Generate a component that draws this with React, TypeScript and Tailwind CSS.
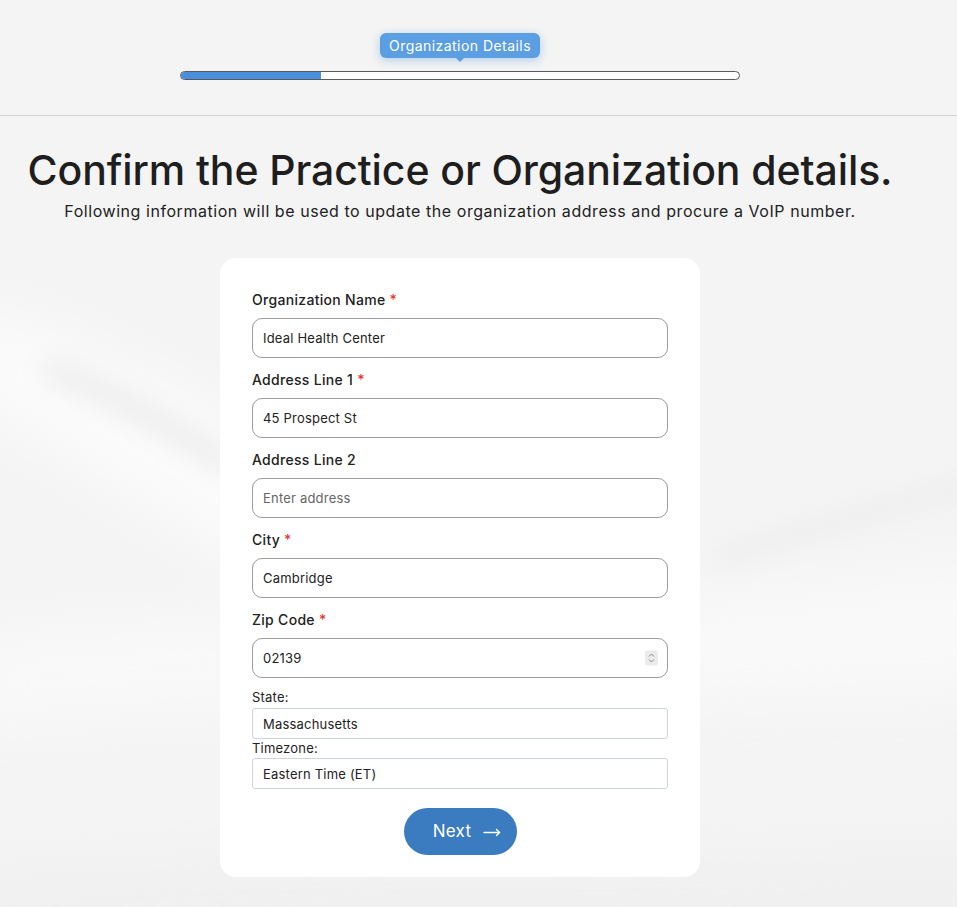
import React from "react"

type Field = {
  label: string
  value?: string
  placeholder?: string
  required?: boolean
  spinner?: boolean
}

const fields: Field[] = [
  { label: "Organization Name", value: "Ideal Health Center", required: true },
  { label: "Address Line 1", value: "45 Prospect St", required: true },
  { label: "Address Line 2", placeholder: "Enter address" },
  { label: "City", value: "Cambridge", required: true },
  { label: "Zip Code", value: "02139", required: true, spinner: true },
]

// soft silk-like background shading
function Waves() {
  return (
    <svg
      className="pointer-events-none absolute inset-0 h-full w-full"
      viewBox="0 0 957 907"
      preserveAspectRatio="none"
    >
      <defs>
        <filter id="soft" x="-30%" y="-30%" width="160%" height="160%">
          <feGaussianBlur stdDeviation="14" />
        </filter>
        <filter id="softer" x="-30%" y="-30%" width="160%" height="160%">
          <feGaussianBlur stdDeviation="30" />
        </filter>
      </defs>
      <path d="M-40 300 C 80 330, 180 400, 320 450 L 320 600 C 180 540, 60 440, -40 400 Z" fill="#fbfbfb" filter="url(#softer)" />
      <path d="M50 370 C 120 395, 170 430, 230 465" stroke="#e4e4e4" strokeWidth="14" fill="none" strokeLinecap="round" filter="url(#soft)" />
      <path d="M-40 640 C 200 600, 500 630, 1000 560 L 1000 690 C 600 710, 300 690, -40 730 Z" fill="#f9f9f9" filter="url(#softer)" />
      <path d="M720 560 C 810 530, 890 505, 990 480" stroke="#e9e9e9" strokeWidth="12" fill="none" strokeLinecap="round" filter="url(#soft)" />
      <path d="M-40 870 C 300 840, 650 870, 1000 840 L 1000 950 L -40 950 Z" fill="#f0f0f0" filter="url(#softer)" />
    </svg>
  )
}

function Arrow() {
  return (
    <svg width="18" height="10" viewBox="0 0 18 10" fill="none" stroke="white" strokeWidth="1.4" strokeLinecap="round">
      <path d="M1 5.5 H16.5" />
      <path d="M13.5 2.5 L16.5 5.5 L13.5 8.5" />
    </svg>
  )
}

export default function App() {
  return (
    <div className="relative min-h-screen overflow-hidden bg-[#f4f4f4] font-['Inter',sans-serif] text-[#1f1f1f]">
      <Waves />
      <header className="relative h-[116px] border-b border-[#d6d6d6] bg-[#f4f4f4]">
        <div className="flex w-[920px] flex-col items-center pt-[33px]">
          <div className="relative flex h-[25px] items-center rounded-md bg-[#5b9ee1] px-[9px] text-[14px] tracking-[0.45px] text-white shadow-[0_2px_10px_rgba(91,158,225,0.45)]">
            Organization Details
            <span className="absolute left-1/2 top-full h-0 w-0 -translate-x-1/2 border-x-[4px] border-t-[4px] border-x-transparent border-t-[#5b9ee1]" />
          </div>
          <div className="mt-[13px] h-[9px] w-[560px] overflow-hidden rounded-full border border-[#5a5a5a] bg-white">
            <div className="h-full w-[140px] bg-[#4a8fdb]" />
          </div>
        </div>
      </header>

      <main className="relative flex w-[920px] flex-col items-center">
        <h1 className="mt-[30px] text-[41px] font-medium leading-[48px] tracking-[-0.1px] text-[#1e1e1e]">
          Confirm the Practice or Organization details.
        </h1>
        <p className="mt-[5px] text-[16px] leading-6 tracking-[0.55px] text-[#222]">
          Following information will be used to update the organization address and procure a VoIP number.
        </p>

        <div className="mt-[35px] flex w-[480px] flex-col rounded-2xl bg-white px-8 pb-[22px] pt-[32px]">
          {fields.map((f, i) => (
            <div key={f.label} className={i > 0 ? "mt-3" : ""}>
              <label className="block text-[14px] font-medium leading-5 tracking-[0.3px] text-[#222]">
                {f.label}
                {f.required && <span className="ml-1 text-[#e5392f]">*</span>}
              </label>
              <div className="relative mt-2">
                <input
                  className="h-10 w-full rounded-[10px] border border-[#9c9c9c] bg-white px-[10px] text-[13px] tracking-[0.2px] text-[#222] outline-none placeholder:text-[#666]"
                  defaultValue={f.value}
                  placeholder={f.placeholder}
                  readOnly
                />
                {f.spinner && (
                  <div className="absolute right-[10px] top-1/2 flex h-[15px] w-[13px] -translate-y-1/2 flex-col items-center justify-center rounded-[2px] bg-[#ebebeb]">
                    <svg width="7" height="11" viewBox="0 0 7 11" fill="none" stroke="#8a8a8a" strokeWidth="1">
                      <path d="M1 4 L3.5 1.5 L6 4" />
                      <path d="M1 7 L3.5 9.5 L6 7" />
                    </svg>
                  </div>
                )}
              </div>
            </div>
          ))}

          <label className="mt-[10px] block text-[13px] leading-[19px] tracking-[0.2px] text-[#222]">State:</label>
          <input
            className="mt-[1px] h-[31px] w-full rounded-[3px] border border-[#ced4dc] px-[10px] text-[13px] tracking-[0.2px] text-[#222] outline-none"
            defaultValue="Massachusetts"
            readOnly
          />
          <label className="block text-[13px] leading-[19px] tracking-[0.2px] text-[#222]">Timezone:</label>
          <input
            className="h-[31px] w-full rounded-[3px] border border-[#ced4dc] px-[10px] text-[13px] tracking-[0.2px] text-[#222] outline-none"
            defaultValue="Eastern Time (ET)"
            readOnly
          />

          <button className="mx-auto mt-[19px] flex h-[47px] w-[113px] items-center justify-center gap-[12px] rounded-full bg-[#3b7bbf] pl-[14px] text-[17px] tracking-[0.3px] text-white">
            Next
            <Arrow />
          </button>
        </div>
      </main>
    </div>
  )
}
